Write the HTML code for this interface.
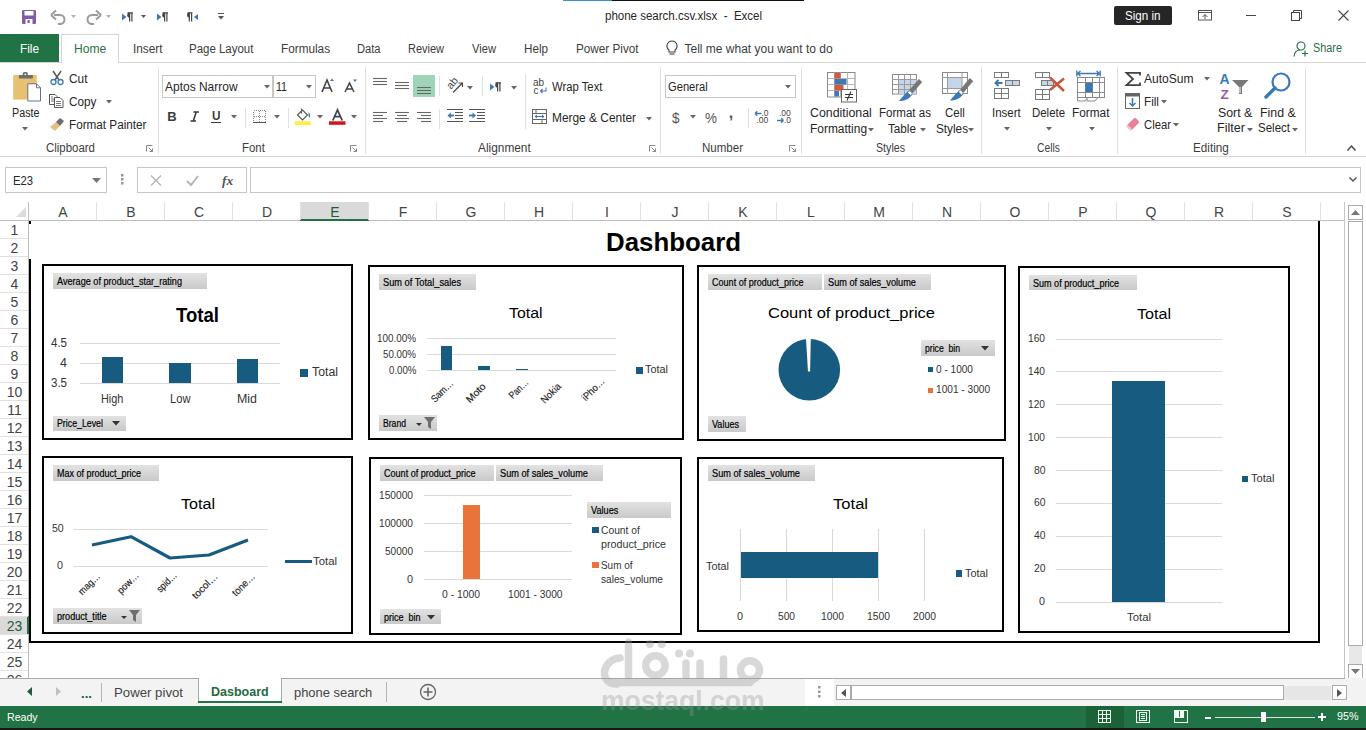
<!DOCTYPE html>
<html><head><meta charset="utf-8"><title>Excel Dashboard</title>
<style>
html,body{margin:0;padding:0;width:1366px;height:730px;overflow:hidden;background:#fff;}
body{position:relative;font-family:"Liberation Sans",sans-serif;}
.t{position:absolute;white-space:pre;}
.r{position:absolute;box-sizing:border-box;}
.s{position:absolute;overflow:visible;}
</style></head><body>
<div class="r" style="left:563.00px;top:0.00px;width:49.00px;height:1.00px;background:#3a8fd0;"></div>
<div class="r" style="left:612.00px;top:0.00px;width:192.00px;height:1.00px;background:#111;"></div>
<svg class="s" style="left:22.00px;top:10.00px;" width="14" height="14" viewBox="0 0 14 14"><rect x="0" y="0" width="14" height="14" rx="1.2" fill="#7b5ea7"/><rect x="2.5" y="1" width="9" height="4.5" fill="#fff"/><rect x="3.5" y="9" width="7" height="5" fill="#fff"/><rect x="5.5" y="10" width="2.2" height="3" fill="#7b5ea7"/></svg>
<svg class="s" style="left:50.00px;top:9.00px;" width="16" height="15" viewBox="0 0 16 15"><path d="M4 6 H10 a4.5 4.5 0 0 1 0 9 H8" fill="none" stroke="#9a9a9a" stroke-width="2"/><path d="M1 6 L6 1.5 M1 6 L6 10.5" stroke="#9a9a9a" stroke-width="2" fill="none"/></svg>
<svg class="s" style="left:71.00px;top:15.00px;" width="5" height="3" viewBox="0 0 5 3"><path d="M0 0 H5 L2.5 3 Z" fill="#b0b0b0"/></svg>
<svg class="s" style="left:86.00px;top:9.00px;" width="16" height="15" viewBox="0 0 16 15"><path d="M12 6 H6 a4.5 4.5 0 0 0 0 9 H8" fill="none" stroke="#9a9a9a" stroke-width="2"/><path d="M15 6 L10 1.5 M15 6 L10 10.5" stroke="#9a9a9a" stroke-width="2" fill="none"/></svg>
<svg class="s" style="left:106.00px;top:15.00px;" width="5" height="3" viewBox="0 0 5 3"><path d="M0 0 H5 L2.5 3 Z" fill="#b0b0b0"/></svg>
<svg class="s" style="left:122.00px;top:12.00px;" width="13" height="10" viewBox="0 0 13 10"><path d="M0 1.5 L4.5 5 L0 8.5 Z" fill="#3b79b6"/><path d="M5.5 0.8 H11 M7.6 1 V9.5 M9.9 1 V9.5" stroke="#444" stroke-width="1.2" fill="none"/><path d="M7.8 0.5 A2.6 2.6 0 0 0 7.8 5.7 Z" fill="#444"/></svg>
<svg class="s" style="left:141.00px;top:15.00px;" width="5" height="3" viewBox="0 0 5 3"><path d="M0 0 H5 L2.5 3 Z" fill="#555"/></svg>
<svg class="s" style="left:157.00px;top:12.00px;" width="13" height="10" viewBox="0 0 13 10"><path d="M0 1.5 L4.5 5 L0 8.5 Z" fill="#3b79b6"/><path d="M5.5 0.8 H11 M7.6 1 V9.5 M9.9 1 V9.5" stroke="#444" stroke-width="1.2" fill="none"/><path d="M7.8 0.5 A2.6 2.6 0 0 0 7.8 5.7 Z" fill="#444"/></svg>
<svg class="s" style="left:186.00px;top:12.00px;" width="13" height="10" viewBox="0 0 13 10"><path d="M1.5 0.8 H6.5 M3.3 1 V9.5 M5.6 1 V9.5" stroke="#444" stroke-width="1.2" fill="none"/><path d="M3.5 0.5 A2.5 2.5 0 0 0 3.5 5.5 Z" fill="#444"/><path d="M12 2 L8 5 L12 8 Z" fill="#3b79b6"/></svg>
<svg class="s" style="left:218.00px;top:13.00px;" width="6" height="7" viewBox="0 0 6 7"><path d="M0 0.5 H6" stroke="#555" stroke-width="1"/><path d="M0 3 H6 L3 6.5 Z" fill="#555"/></svg>
<div class="t" style="left:604.50px;top:10.00px;font-size:12.00px;line-height:12.00px;color:#262626;transform:scaleX(0.9585);transform-origin:0 0;">phone search.csv.xlsx  -  Excel</div>
<div class="r" style="left:1114.00px;top:6.00px;width:58.00px;height:19.00px;background:#262626;border-radius:2px;"></div>
<div class="t" style="left:1125.25px;top:9.75px;font-size:12.50px;line-height:12.50px;color:#fff;transform:scaleX(0.9293);transform-origin:0 0;">Sign in</div>
<svg class="s" style="left:1198.00px;top:10.00px;" width="14" height="11" viewBox="0 0 14 11"><rect x="0.5" y="0.5" width="13" height="9.5" fill="none" stroke="#555"/><path d="M0.5 2.5 H13.5" stroke="#555"/><path d="M7 9 V4.5 M4.5 7 L7 4.5 L9.5 7" stroke="#555" fill="none"/></svg>
<div class="r" style="left:1246.00px;top:15.00px;width:10.00px;height:1.00px;background:#444;"></div>
<svg class="s" style="left:1291.00px;top:10.00px;" width="11" height="11" viewBox="0 0 11 11"><rect x="0.5" y="2.5" width="8" height="8" fill="none" stroke="#444"/><path d="M2.5 2.5 V0.5 H10.5 V8.5 H8.5" fill="none" stroke="#444"/></svg>
<svg class="s" style="left:1338.00px;top:10.00px;" width="11" height="11" viewBox="0 0 11 11"><path d="M0.5 0.5 L10.5 10.5 M10.5 0.5 L0.5 10.5" stroke="#444" stroke-width="1.1"/></svg>
<div class="r" style="left:0.00px;top:34.00px;width:59.00px;height:29.00px;background:#217346;"></div>
<div class="t" style="left:20.00px;top:42.75px;font-size:12.50px;line-height:12.50px;color:#fff;transform:scaleX(0.9453);transform-origin:0 0;">File</div>
<div class="r" style="left:0.00px;top:62.00px;width:1366.00px;height:1.00px;background:#d5d5d5;"></div>
<div class="r" style="left:61.00px;top:34.00px;width:58.00px;height:29.00px;background:#fff;border:1px solid #d5d5d5;border-bottom:none;"></div>
<div class="t" style="left:73.60px;top:43.00px;font-size:12.00px;line-height:12.00px;color:#2b6e49;transform:scaleX(1.0094);transform-origin:0 0;">Home</div>
<div class="t" style="left:133.00px;top:43.00px;font-size:12.00px;line-height:12.00px;color:#3c3c3c;transform:scaleX(0.9833);transform-origin:0 0;">Insert</div>
<div class="t" style="left:189.40px;top:43.00px;font-size:12.00px;line-height:12.00px;color:#3c3c3c;transform:scaleX(0.9555);transform-origin:0 0;">Page Layout</div>
<div class="t" style="left:281.00px;top:43.00px;font-size:12.00px;line-height:12.00px;color:#3c3c3c;transform:scaleX(0.9800);transform-origin:0 0;">Formulas</div>
<div class="t" style="left:357.00px;top:43.00px;font-size:12.00px;line-height:12.00px;color:#3c3c3c;transform:scaleX(0.9291);transform-origin:0 0;">Data</div>
<div class="t" style="left:408.40px;top:43.00px;font-size:12.00px;line-height:12.00px;color:#3c3c3c;transform:scaleX(0.9162);transform-origin:0 0;">Review</div>
<div class="t" style="left:472.00px;top:43.00px;font-size:12.00px;line-height:12.00px;color:#3c3c3c;transform:scaleX(0.9302);transform-origin:0 0;">View</div>
<div class="t" style="left:524.30px;top:43.00px;font-size:12.00px;line-height:12.00px;color:#3c3c3c;transform:scaleX(0.9717);transform-origin:0 0;">Help</div>
<div class="t" style="left:576.00px;top:43.00px;font-size:12.00px;line-height:12.00px;color:#3c3c3c;transform:scaleX(0.9766);transform-origin:0 0;">Power Pivot</div>
<div class="t" style="left:684.50px;top:43.00px;font-size:12.00px;line-height:12.00px;color:#3c3c3c;">Tell me what you want to do</div>
<svg class="s" style="left:666.00px;top:40.00px;" width="12" height="16" viewBox="0 0 12 16"><path d="M6 1 a5 5 0 0 1 3 9 V12 H3 V10 a5 5 0 0 1 3 -9 Z" fill="none" stroke="#444" stroke-width="1.1"/><path d="M3.5 14 H8.5" stroke="#444" stroke-width="1.1"/></svg>
<svg class="s" style="left:1293.00px;top:41.00px;" width="16" height="16" viewBox="0 0 16 16"><circle cx="8" cy="5" r="4" fill="none" stroke="#2b6e49" stroke-width="1.2"/><path d="M1 15.5 C1.5 11 4 9 7 9" fill="none" stroke="#2b6e49" stroke-width="1.2"/><path d="M9 12.5 H15 M12 9.5 V15.5" stroke="#2b6e49" stroke-width="1.2"/></svg>
<div class="t" style="left:1313.00px;top:42.45px;font-size:12.50px;line-height:12.50px;color:#2b6e49;transform:scaleX(0.8683);transform-origin:0 0;">Share</div>
<div class="r" style="left:0.00px;top:156.00px;width:1366.00px;height:1.00px;background:#d5d5d5;"></div>
<div class="r" style="left:157.50px;top:67.00px;width:1.00px;height:87.00px;background:#e1e1e1;"></div>
<div class="r" style="left:364.50px;top:67.00px;width:1.00px;height:87.00px;background:#e1e1e1;"></div>
<div class="r" style="left:660.30px;top:67.00px;width:1.00px;height:87.00px;background:#e1e1e1;"></div>
<div class="r" style="left:800.70px;top:67.00px;width:1.00px;height:87.00px;background:#e1e1e1;"></div>
<div class="r" style="left:981.30px;top:67.00px;width:1.00px;height:87.00px;background:#e1e1e1;"></div>
<div class="r" style="left:1117.20px;top:67.00px;width:1.00px;height:87.00px;background:#e1e1e1;"></div>
<div class="r" style="left:1304.70px;top:67.00px;width:1.00px;height:87.00px;background:#e1e1e1;"></div>
<div class="t" style="left:46.00px;top:141.80px;font-size:12.00px;line-height:12.00px;color:#3c3c3c;transform:scaleX(0.9533);transform-origin:0 0;">Clipboard</div>
<div class="t" style="left:241.60px;top:141.80px;font-size:12.00px;line-height:12.00px;color:#3c3c3c;transform:scaleX(0.9500);transform-origin:0 0;">Font</div>
<div class="t" style="left:478.00px;top:141.80px;font-size:12.00px;line-height:12.00px;color:#3c3c3c;transform:scaleX(0.9888);transform-origin:0 0;">Alignment</div>
<div class="t" style="left:702.00px;top:141.80px;font-size:12.00px;line-height:12.00px;color:#3c3c3c;transform:scaleX(0.9602);transform-origin:0 0;">Number</div>
<div class="t" style="left:876.00px;top:141.80px;font-size:12.00px;line-height:12.00px;color:#3c3c3c;transform:scaleX(0.8869);transform-origin:0 0;">Styles</div>
<div class="t" style="left:1037.35px;top:141.80px;font-size:12.00px;line-height:12.00px;color:#3c3c3c;transform:scaleX(0.8577);transform-origin:0 0;">Cells</div>
<div class="t" style="left:1192.50px;top:141.80px;font-size:12.00px;line-height:12.00px;color:#3c3c3c;transform:scaleX(0.9755);transform-origin:0 0;">Editing</div>
<svg class="s" style="left:146.00px;top:145.00px;" width="7" height="7" viewBox="0 0 7 7"><path d="M0.5 6.5 V0.5 H6.5" fill="none" stroke="#888"/><path d="M2.5 2.5 L6.5 6.5 M3.5 6.5 H6.5 V3.5" fill="none" stroke="#888"/></svg>
<svg class="s" style="left:350.00px;top:145.00px;" width="7" height="7" viewBox="0 0 7 7"><path d="M0.5 6.5 V0.5 H6.5" fill="none" stroke="#888"/><path d="M2.5 2.5 L6.5 6.5 M3.5 6.5 H6.5 V3.5" fill="none" stroke="#888"/></svg>
<svg class="s" style="left:649.00px;top:145.00px;" width="7" height="7" viewBox="0 0 7 7"><path d="M0.5 6.5 V0.5 H6.5" fill="none" stroke="#888"/><path d="M2.5 2.5 L6.5 6.5 M3.5 6.5 H6.5 V3.5" fill="none" stroke="#888"/></svg>
<svg class="s" style="left:789.00px;top:145.00px;" width="7" height="7" viewBox="0 0 7 7"><path d="M0.5 6.5 V0.5 H6.5" fill="none" stroke="#888"/><path d="M2.5 2.5 L6.5 6.5 M3.5 6.5 H6.5 V3.5" fill="none" stroke="#888"/></svg>
<svg class="s" style="left:12.00px;top:71.00px;" width="30" height="32" viewBox="0 0 30 32"><rect x="1.2" y="4" width="23.5" height="24.6" fill="#e8c170"/><rect x="6.9" y="4" width="14" height="3.6" rx="0.8" fill="#6d6d6d"/><rect x="10.8" y="1" width="5" height="4" rx="1.6" fill="#6d6d6d"/><circle cx="13.3" cy="3.3" r="0.9" fill="#fff"/><path d="M15.8 12.8 H24.5 L28.5 16.8 V30 H15.8 Z" fill="#fff" stroke="#6b7280"/><path d="M24.5 12.8 V16.8 H28.5" fill="none" stroke="#6b7280"/></svg>
<div class="t" style="left:11.75px;top:107.35px;font-size:12.50px;line-height:12.50px;color:#262626;transform:scaleX(0.8594);transform-origin:0 0;">Paste</div>
<svg class="s" style="left:22.00px;top:127.00px;" width="6" height="4" viewBox="0 0 6 4"><path d="M0 0 H6 L3 3.5 Z" fill="#666"/></svg>
<svg class="s" style="left:50.00px;top:71.00px;" width="14" height="14" viewBox="0 0 14 14"><path d="M3 0 L9 9 M11 0 L5 9" stroke="#555" stroke-width="1.5"/><circle cx="3.5" cy="11" r="2.5" fill="none" stroke="#3b79b6" stroke-width="1.3"/><circle cx="10.5" cy="11" r="2.5" fill="none" stroke="#3b79b6" stroke-width="1.3"/></svg>
<div class="t" style="left:68.50px;top:72.75px;font-size:12.50px;line-height:12.50px;color:#262626;transform:scaleX(0.9487);transform-origin:0 0;">Cut</div>
<svg class="s" style="left:49.00px;top:94.00px;" width="15" height="14" viewBox="0 0 15 14"><path d="M0.5 0.5 H6 L8 2.5 V10.5 H0.5 Z" fill="#fff" stroke="#555"/><path d="M5.5 3.5 H11 L14 6.5 V13.5 H5.5 Z" fill="#fff" stroke="#555"/><path d="M7 7.5 H12 M7 9.5 H12 M7 11.5 H12 M2 3 H4 M2 5 H5 M2 7 H5" stroke="#555" stroke-width="0.8"/></svg>
<div class="t" style="left:68.50px;top:95.55px;font-size:12.50px;line-height:12.50px;color:#262626;transform:scaleX(0.9418);transform-origin:0 0;">Copy</div>
<svg class="s" style="left:106.00px;top:100.00px;" width="6" height="4" viewBox="0 0 6 4"><path d="M0 0 H6 L3 3.5 Z" fill="#666"/></svg>
<svg class="s" style="left:50.00px;top:117.00px;" width="15" height="14" viewBox="0 0 15 14"><path d="M0 10 L6 5 L10 9 L5 14 Z" fill="#e3c281"/><path d="M6 5 L10 1 L14 4 L10 9 Z" fill="#6d6d6d"/></svg>
<div class="t" style="left:68.50px;top:119.40px;font-size:12.00px;line-height:12.00px;color:#262626;transform:scaleX(0.9761);transform-origin:0 0;">Format Painter</div>
<div class="r" style="left:162.00px;top:75.00px;width:111.00px;height:23.00px;border:1px solid #c6c6c6;background:#fff;"></div>
<div class="r" style="left:272.50px;top:75.00px;width:43.00px;height:23.00px;border:1px solid #c6c6c6;background:#fff;"></div>
<div class="t" style="left:165.00px;top:81.15px;font-size:12.50px;line-height:12.50px;color:#262626;transform:scaleX(0.9578);transform-origin:0 0;">Aptos Narrow</div>
<svg class="s" style="left:263.50px;top:85.00px;" width="6" height="4" viewBox="0 0 6 4"><path d="M0 0 H6 L3 3.5 Z" fill="#666"/></svg>
<div class="t" style="left:276.00px;top:81.15px;font-size:12.50px;line-height:12.50px;color:#262626;transform:scaleX(0.8462);transform-origin:0 0;">11</div>
<svg class="s" style="left:306.00px;top:85.00px;" width="6" height="4" viewBox="0 0 6 4"><path d="M0 0 H6 L3 3.5 Z" fill="#666"/></svg>
<svg class="s" style="left:321.00px;top:78.00px;" width="14" height="15" viewBox="0 0 14 15"><path d="M1 14 L6 2 L11 14 M3 10 H9" fill="none" stroke="#444" stroke-width="1.6"/><path d="M9 3 L11 0.5 L13 3 Z" fill="#3b79b6"/></svg>
<svg class="s" style="left:344.00px;top:79.00px;" width="14" height="14" viewBox="0 0 14 14"><path d="M1 13 L5.5 4 L10 13 M3 10 H8" fill="none" stroke="#444" stroke-width="1.5"/><path d="M9 0.5 H13 L11 3 Z" fill="#3b79b6"/></svg>
<div class="t" style="left:167.30px;top:109.50px;font-size:13.00px;line-height:13.00px;color:#3c3c3c;font-weight:bold;">B</div>
<svg class="s" style="left:189.00px;top:111.00px;" width="11" height="11" viewBox="0 0 11 11"><path d="M4.5 1 H10 M1.5 10 H7 M7.2 1 L4.3 10" stroke="#3c3c3c" stroke-width="1.6" fill="none"/></svg>
<div class="t" style="left:212.15px;top:109.75px;font-size:12.50px;line-height:12.50px;color:#3c3c3c;font-weight:bold;transform:scaleX(0.9444);transform-origin:0 0;">U</div>
<div class="r" style="left:211.00px;top:122.00px;width:10.00px;height:1.00px;background:#3c3c3c;"></div>
<svg class="s" style="left:231.00px;top:115.00px;" width="6" height="4" viewBox="0 0 6 4"><path d="M0 0 H6 L3 3.5 Z" fill="#666"/></svg>
<div class="r" style="left:244.50px;top:107.50px;width:1.00px;height:20.00px;background:#e1e1e1;"></div>
<svg class="s" style="left:253.00px;top:110.00px;" width="13" height="13" viewBox="0 0 13 13"><g shape-rendering="crispEdges" stroke="#8a8a8a" stroke-dasharray="1 1" fill="none"><rect x="0.5" y="0.5" width="12" height="12"/><path d="M6.5 0.5 V12.5 M0.5 6.5 H12.5"/></g><path d="M0 12.5 H13" stroke="#555" shape-rendering="crispEdges"/></svg>
<svg class="s" style="left:274.00px;top:115.00px;" width="6" height="4" viewBox="0 0 6 4"><path d="M0 0 H6 L3 3.5 Z" fill="#666"/></svg>
<div class="r" style="left:287.50px;top:107.50px;width:1.00px;height:20.00px;background:#e1e1e1;"></div>
<svg class="s" style="left:294.00px;top:108.00px;" width="18" height="18" viewBox="0 0 18 18"><path d="M3.5 7 L8.5 2 L13.5 7 L8.5 12 Z" fill="#fff" stroke="#555" stroke-width="1.1"/><path d="M7.5 0.5 V5.5" stroke="#555"/><path d="M14.5 4 Q17 7 15.5 10 Q14 8 14.5 4 Z" fill="#3b79b6"/><rect x="0.7" y="13.3" width="16" height="3.7" fill="#ffef3a"/></svg>
<svg class="s" style="left:317.00px;top:115.00px;" width="6" height="4" viewBox="0 0 6 4"><path d="M0 0 H6 L3 3.5 Z" fill="#666"/></svg>
<svg class="s" style="left:329.00px;top:109.00px;" width="17" height="17" viewBox="0 0 17 17"><path d="M3.8 11.5 L8.5 1 L13.2 11.5 M5.6 7.6 H11.4" fill="none" stroke="#444" stroke-width="1.8"/><rect x="0" y="12.3" width="16.5" height="3.5" fill="#d4141b"/></svg>
<svg class="s" style="left:351.00px;top:115.00px;" width="6" height="4" viewBox="0 0 6 4"><path d="M0 0 H6 L3 3.5 Z" fill="#666"/></svg>
<svg class="s" style="left:373.00px;top:78.00px;" width="15" height="10" viewBox="0 0 15 10"><path d="M0 0.5 H14" stroke="#666" stroke-width="1.1"/><path d="M0 3.5 H14" stroke="#666" stroke-width="1.1"/><path d="M0 6.5 H14" stroke="#666" stroke-width="1.1"/></svg>
<svg class="s" style="left:395.00px;top:82.00px;" width="15" height="10" viewBox="0 0 15 10"><path d="M0 0.5 H14" stroke="#666" stroke-width="1.1"/><path d="M0 3.5 H14" stroke="#666" stroke-width="1.1"/><path d="M0 6.5 H14" stroke="#666" stroke-width="1.1"/></svg>
<div class="r" style="left:413.00px;top:75.00px;width:22.00px;height:22.00px;background:#9fd5b7;"></div>
<svg class="s" style="left:417.00px;top:87.00px;" width="15" height="10" viewBox="0 0 15 10"><path d="M0 0.5 H14" stroke="#666" stroke-width="1.1"/><path d="M0 3.5 H14" stroke="#666" stroke-width="1.1"/><path d="M0 6.5 H14" stroke="#666" stroke-width="1.1"/></svg>
<svg class="s" style="left:446.00px;top:77.00px;" width="18" height="17" viewBox="0 0 18 17"><text x="1" y="10" font-family="Liberation Sans" font-size="10.5" fill="#444" transform="rotate(-52 6 7)">ab</text><path d="M7 15.5 L16.5 6 M12.5 6 H16.5 V10" fill="none" stroke="#444" stroke-width="1.1"/></svg>
<svg class="s" style="left:467.00px;top:86.00px;" width="6" height="4" viewBox="0 0 6 4"><path d="M0 0 H6 L3 3.5 Z" fill="#666"/></svg>
<div class="r" style="left:439.00px;top:76.00px;width:1.00px;height:20.00px;background:#e1e1e1;"></div>
<div class="r" style="left:481.50px;top:76.00px;width:1.00px;height:20.00px;background:#e1e1e1;"></div>
<svg class="s" style="left:490.00px;top:82.00px;" width="13" height="10" viewBox="0 0 13 10"><path d="M0 1.5 L4.5 5 L0 8.5 Z" fill="#3b79b6"/><path d="M5.5 0.8 H11 M7.6 1 V9.5 M9.9 1 V9.5" stroke="#444" stroke-width="1.2" fill="none"/><path d="M7.8 0.5 A2.6 2.6 0 0 0 7.8 5.7 Z" fill="#444"/></svg>
<svg class="s" style="left:511.00px;top:86.00px;" width="6" height="4" viewBox="0 0 6 4"><path d="M0 0 H6 L3 3.5 Z" fill="#666"/></svg>
<div class="r" style="left:524.50px;top:74.00px;width:1.00px;height:55.00px;background:#e1e1e1;"></div>
<svg class="s" style="left:533.00px;top:77.00px;" width="15" height="18" viewBox="0 0 15 18"><text x="0" y="8.5" font-family="Liberation Sans" font-size="10" fill="#444">ab</text><text x="0.5" y="16.5" font-family="Liberation Sans" font-size="10" fill="#444">c</text><path d="M13 10.5 V14 H7.5 M9.5 12 L7.5 14 L9.5 16" fill="none" stroke="#3b79b6" stroke-width="1.1"/></svg>
<div class="t" style="left:551.60px;top:81.25px;font-size:12.50px;line-height:12.50px;color:#262626;transform:scaleX(0.9032);transform-origin:0 0;">Wrap Text</div>
<svg class="s" style="left:373.00px;top:112.00px;" width="15" height="13" viewBox="0 0 15 13"><path d="M0 0.5 H14" stroke="#666" stroke-width="1.1"/><path d="M0 3.5 H10" stroke="#666" stroke-width="1.1"/><path d="M0 6.5 H14" stroke="#666" stroke-width="1.1"/><path d="M0 9.5 H10" stroke="#666" stroke-width="1.1"/></svg>
<svg class="s" style="left:395.00px;top:112.00px;" width="15" height="13" viewBox="0 0 15 13"><path d="M0 0.5 H14" stroke="#666" stroke-width="1.1"/><path d="M2 3.5 H12" stroke="#666" stroke-width="1.1"/><path d="M0 6.5 H14" stroke="#666" stroke-width="1.1"/><path d="M2 9.5 H12" stroke="#666" stroke-width="1.1"/></svg>
<svg class="s" style="left:417.00px;top:112.00px;" width="15" height="13" viewBox="0 0 15 13"><path d="M0 0.5 H14" stroke="#666" stroke-width="1.1"/><path d="M4 3.5 H14" stroke="#666" stroke-width="1.1"/><path d="M0 6.5 H14" stroke="#666" stroke-width="1.1"/><path d="M4 9.5 H14" stroke="#666" stroke-width="1.1"/></svg>
<div class="r" style="left:439.00px;top:109.00px;width:1.00px;height:20.00px;background:#e1e1e1;"></div>
<svg class="s" style="left:447.00px;top:109.00px;" width="16" height="14" viewBox="0 0 16 14"><path d="M0 0.5 H16 M8 3.5 H16 M8 6.5 H16 M8 9.5 H16 M0 12.5 H16" stroke="#555" stroke-width="1.1"/><path d="M0.5 6.5 L4 3.5 V9.5 Z" fill="#3b79b6"/><path d="M3 6.5 H7" stroke="#3b79b6" stroke-width="1.8"/></svg>
<svg class="s" style="left:469.00px;top:109.00px;" width="16" height="14" viewBox="0 0 16 14"><path d="M0 0.5 H16 M8 3.5 H16 M8 6.5 H16 M8 9.5 H16 M0 12.5 H16" stroke="#555" stroke-width="1.1"/><path d="M7 6.5 L3.5 3.5 V9.5 Z" fill="#3b79b6"/><path d="M0 6.5 H4.5" stroke="#3b79b6" stroke-width="1.8"/></svg>
<svg class="s" style="left:532.00px;top:109.00px;" width="15" height="15" viewBox="0 0 15 15"><rect x="0.5" y="0.5" width="14" height="14" fill="#fff" stroke="#666"/><path d="M0.5 4.5 H14.5 M0.5 10.5 H14.5 M4 0.5 V4.5 M10 10.5 V14.5" stroke="#666"/><path d="M3 7.5 H12 M3 7.5 L5 6 M3 7.5 L5 9 M12 7.5 L10 6 M12 7.5 L10 9" stroke="#3b79b6" fill="none"/></svg>
<div class="t" style="left:551.60px;top:112.45px;font-size:12.50px;line-height:12.50px;color:#262626;transform:scaleX(0.9524);transform-origin:0 0;">Merge &amp; Center</div>
<svg class="s" style="left:646.00px;top:117.00px;" width="6" height="4" viewBox="0 0 6 4"><path d="M0 0 H6 L3 3.5 Z" fill="#666"/></svg>
<div class="r" style="left:665.00px;top:75.00px;width:131.00px;height:23.00px;border:1px solid #c6c6c6;background:#fff;"></div>
<div class="t" style="left:668.00px;top:81.25px;font-size:12.50px;line-height:12.50px;color:#262626;transform:scaleX(0.8921);transform-origin:0 0;">General</div>
<svg class="s" style="left:785.00px;top:85.00px;" width="6" height="4" viewBox="0 0 6 4"><path d="M0 0 H6 L3 3.5 Z" fill="#666"/></svg>
<div class="t" style="left:672.25px;top:110.00px;font-size:15.00px;line-height:15.00px;color:#555;transform:scaleX(0.9036);transform-origin:0 0;">$</div>
<svg class="s" style="left:690.00px;top:115.00px;" width="6" height="4" viewBox="0 0 6 4"><path d="M0 0 H6 L3 3.5 Z" fill="#666"/></svg>
<div class="t" style="left:704.50px;top:110.75px;font-size:14.50px;line-height:14.50px;color:#555;transform:scaleX(0.9302);transform-origin:0 0;">%</div>
<div class="t" style="left:728.80px;top:104.50px;font-size:16.00px;line-height:16.00px;color:#555;font-weight:bold;">,</div>
<div class="r" style="left:747.50px;top:108.00px;width:1.00px;height:20.00px;background:#e1e1e1;"></div>
<svg class="s" style="left:754.00px;top:109.00px;" width="17" height="15" viewBox="0 0 17 15"><text x="7.5" y="7" font-family="Liberation Sans" font-size="8.5" fill="#444">.0</text><text x="2.5" y="14" font-family="Liberation Sans" font-size="8.5" fill="#444">.00</text><path d="M1 4.5 H7.5 M1 4.5 L3.3 2.2 M1 4.5 L3.3 6.8" stroke="#3b79b6" stroke-width="1.3" fill="none"/></svg>
<svg class="s" style="left:777.00px;top:109.00px;" width="17" height="15" viewBox="0 0 17 15"><text x="2" y="7" font-family="Liberation Sans" font-size="8.5" fill="#444">.00</text><text x="7" y="14" font-family="Liberation Sans" font-size="8.5" fill="#444">.0</text><path d="M0 11.5 H6.5 M6.5 11.5 L4.2 9.2 M6.5 11.5 L4.2 13.8" stroke="#3b79b6" stroke-width="1.3" fill="none"/></svg>
<svg class="s" style="left:826.00px;top:71.00px;" width="32" height="32" viewBox="0 0 32 32"><rect x="1.5" y="1.5" width="27.5" height="24.5" fill="#fff" stroke="#8a8a8a"/><path d="M1.5 7.5 H29 M1.5 13.5 H29 M1.5 19.5 H29 M8.5 1.5 V26 M14.5 1.5 V26 M21.5 1.5 V26" stroke="#b5b5b5"/><rect x="8.5" y="2" width="6" height="5.5" fill="#d9553b"/><rect x="8.5" y="8" width="12" height="5.5" fill="#3b79b6"/><rect x="8.5" y="14" width="9" height="5.5" fill="#d9553b"/><rect x="8.5" y="20" width="4.5" height="5.5" fill="#3b79b6"/><rect x="15.5" y="18.5" width="15" height="12.5" fill="#fff" stroke="#666"/><path d="M19 23.5 H27 M19 26.5 H27 M25 20.5 L21 29.5" stroke="#333" stroke-width="1.1"/></svg>
<div class="t" style="left:810.15px;top:106.55px;font-size:12.50px;line-height:12.50px;color:#262626;transform:scaleX(0.9872);transform-origin:0 0;">Conditional</div>
<div class="t" style="left:809.50px;top:122.75px;font-size:12.50px;line-height:12.50px;color:#262626;transform:scaleX(0.9548);transform-origin:0 0;">Formatting</div>
<svg class="s" style="left:868.00px;top:128.00px;" width="6" height="4" viewBox="0 0 6 4"><path d="M0 0 H6 L3 3.5 Z" fill="#666"/></svg>
<svg class="s" style="left:891.00px;top:73.00px;" width="31" height="29" viewBox="0 0 31 29"><rect x="1.5" y="1.5" width="24" height="19.5" fill="#fff" stroke="#8a8a8a"/><rect x="8" y="6.5" width="17.5" height="14.5" fill="#c6d6ea"/><path d="M1.5 6.5 H25.5 M1.5 11.5 H25.5 M1.5 16.5 H25.5 M7.5 1.5 V21 M13.5 1.5 V21 M19.5 1.5 V21" stroke="#9a9a9a"/><path d="M29.5 7.5 L20 18.5" stroke="#777" stroke-width="4.5"/><circle cx="18.5" cy="20.5" r="2.6" fill="#fff" stroke="#777"/><path d="M16.5 19 C13 21 11 25 8 28 C13 28 19 26 20 22.5 Z" fill="#3b79b6"/></svg>
<div class="t" style="left:879.00px;top:106.55px;font-size:12.50px;line-height:12.50px;color:#262626;transform:scaleX(0.9236);transform-origin:0 0;">Format as</div>
<div class="t" style="left:888.00px;top:122.75px;font-size:12.50px;line-height:12.50px;color:#262626;transform:scaleX(0.9365);transform-origin:0 0;">Table</div>
<svg class="s" style="left:920.00px;top:128.00px;" width="6" height="4" viewBox="0 0 6 4"><path d="M0 0 H6 L3 3.5 Z" fill="#666"/></svg>
<svg class="s" style="left:942.00px;top:71.00px;" width="31" height="31" viewBox="0 0 31 31"><rect x="0.5" y="1.5" width="25" height="21" fill="#fff" stroke="#8a8a8a"/><rect x="5.5" y="6.5" width="14.5" height="11" fill="#c6d6ea"/><path d="M0.5 6.5 H25.5 M0.5 17.5 H25.5 M5.5 1.5 V22.5 M20 1.5 V22.5" stroke="#9a9a9a"/><path d="M29.5 8.5 L20 20" stroke="#777" stroke-width="4.5"/><circle cx="18.5" cy="22" r="2.6" fill="#fff" stroke="#777"/><path d="M16.5 20.5 C13 22.5 11 26.5 8 29.5 C13 29.5 19 27.5 20 24 Z" fill="#3b79b6"/></svg>
<div class="t" style="left:945.15px;top:106.55px;font-size:12.50px;line-height:12.50px;color:#262626;transform:scaleX(0.9163);transform-origin:0 0;">Cell</div>
<div class="t" style="left:936.00px;top:122.75px;font-size:12.50px;line-height:12.50px;color:#262626;transform:scaleX(0.9412);transform-origin:0 0;">Styles</div>
<svg class="s" style="left:968.00px;top:128.00px;" width="6" height="4" viewBox="0 0 6 4"><path d="M0 0 H6 L3 3.5 Z" fill="#666"/></svg>
<svg class="s" style="left:993.00px;top:72.00px;" width="28" height="28" viewBox="0 0 28 28"><g fill="#fff" stroke="#7a7a7a"><rect x="1.5" y="0.5" width="14" height="5"/><path d="M8.5 0.5 V5.5"/><rect x="12.5" y="8.5" width="14" height="5" fill="#c6d6ea"/><path d="M19.5 8.5 V13.5"/><rect x="1.5" y="16.5" width="14" height="10"/><path d="M1.5 21.5 H15.5 M8.5 16.5 V26.5"/></g><path d="M2.5 11 H9.5 M5.5 8 L2.5 11 L5.5 14" fill="none" stroke="#3b79b6" stroke-width="2"/></svg>
<div class="t" style="left:992.00px;top:106.75px;font-size:12.50px;line-height:12.50px;color:#262626;transform:scaleX(0.9201);transform-origin:0 0;">Insert</div>
<svg class="s" style="left:1003.50px;top:127.00px;" width="6" height="4" viewBox="0 0 6 4"><path d="M0 0 H6 L3 3.5 Z" fill="#666"/></svg>
<svg class="s" style="left:1034.00px;top:72.00px;" width="31" height="28" viewBox="0 0 31 28"><g fill="#fff" stroke="#7a7a7a"><rect x="1.5" y="0.5" width="14" height="5"/><path d="M8.5 0.5 V5.5"/><rect x="7.5" y="8.5" width="12" height="5" fill="#c6d6ea"/><path d="M13.5 8.5 V13.5"/><rect x="1.5" y="17.5" width="14" height="10"/><path d="M1.5 22.5 H15.5 M8.5 17.5 V27.5"/></g><path d="M16 5.5 L30 19 M30 6.5 L16 18" stroke="#c9563c" stroke-width="2.5"/></svg>
<div class="t" style="left:1032.00px;top:106.75px;font-size:12.50px;line-height:12.50px;color:#262626;transform:scaleX(0.9141);transform-origin:0 0;">Delete</div>
<svg class="s" style="left:1046.00px;top:127.00px;" width="6" height="4" viewBox="0 0 6 4"><path d="M0 0 H6 L3 3.5 Z" fill="#666"/></svg>
<svg class="s" style="left:1076.00px;top:70.00px;" width="30" height="32" viewBox="0 0 30 32"><path d="M1.5 3.5 H23.5 M4.5 1 L1.5 3.5 L4.5 6 M20.5 1 L23.5 3.5 L20.5 6 M0.8 0.5 V6.5 M24.2 0.5 V6.5" fill="none" stroke="#3b79b6" stroke-width="1.3"/><g fill="none" stroke="#8a8a8a"><rect x="1.5" y="7.5" width="27" height="20" fill="#fff"/><path d="M1.5 12.5 H28.5 M1.5 22.5 H28.5 M9.5 7.5 V27.5 M16.5 7.5 V27.5 M23.5 7.5 V27.5"/><path d="M1.5 27.5 V31 H9 L11 28.5 M11 27.5 V31 H19 L21.5 28"/></g><rect x="9.5" y="13" width="7" height="9" fill="#3b79b6"/></svg>
<div class="t" style="left:1071.95px;top:106.75px;font-size:12.50px;line-height:12.50px;color:#262626;transform:scaleX(0.9470);transform-origin:0 0;">Format</div>
<svg class="s" style="left:1089.00px;top:127.00px;" width="6" height="4" viewBox="0 0 6 4"><path d="M0 0 H6 L3 3.5 Z" fill="#666"/></svg>
<svg class="s" style="left:1125.00px;top:72.00px;" width="16" height="14" viewBox="0 0 16 14"><path d="M15 3.5 V0.8 H1.5 L8 7 L1.5 13.2 H15 V10.5" fill="none" stroke="#444" stroke-width="1.8"/></svg>
<div class="t" style="left:1144.40px;top:72.95px;font-size:12.50px;line-height:12.50px;color:#262626;transform:scaleX(0.9650);transform-origin:0 0;">AutoSum</div>
<svg class="s" style="left:1204.00px;top:77.00px;" width="6" height="4" viewBox="0 0 6 4"><path d="M0 0 H6 L3 3.5 Z" fill="#666"/></svg>
<svg class="s" style="left:1125.00px;top:93.00px;" width="16" height="16" viewBox="0 0 16 16"><rect x="0.5" y="0.5" width="14" height="15" fill="#fff" stroke="#666"/><rect x="0.5" y="0.5" width="14" height="3" fill="#666"/><path d="M7.5 5 V13 M4.5 10 L7.5 13 L10.5 10" stroke="#3b79b6" stroke-width="1.5" fill="none"/></svg>
<div class="t" style="left:1144.40px;top:95.75px;font-size:12.50px;line-height:12.50px;color:#262626;transform:scaleX(0.9375);transform-origin:0 0;">Fill</div>
<svg class="s" style="left:1161.00px;top:100.00px;" width="6" height="4" viewBox="0 0 6 4"><path d="M0 0 H6 L3 3.5 Z" fill="#666"/></svg>
<svg class="s" style="left:1126.00px;top:117.00px;" width="14" height="13" viewBox="0 0 14 13"><path d="M0.8 8.5 L8 1.3 Q9 0.3 10 1.3 L12.7 4 Q13.7 5 12.7 6 L5.5 13.2 Z" fill="#e8829a"/><path d="M0.8 8.5 L5.5 13.2" stroke="#f4c1cd" stroke-width="2.2"/></svg>
<div class="t" style="left:1144.40px;top:118.75px;font-size:12.50px;line-height:12.50px;color:#262626;transform:scaleX(0.9030);transform-origin:0 0;">Clear</div>
<svg class="s" style="left:1173.00px;top:123.00px;" width="6" height="4" viewBox="0 0 6 4"><path d="M0 0 H6 L3 3.5 Z" fill="#666"/></svg>
<svg class="s" style="left:1219.00px;top:72.00px;" width="31" height="28" viewBox="0 0 31 28"><text x="0.5" y="12" font-family="Liberation Sans" font-weight="bold" font-size="14" fill="#3b79b6">A</text><text x="1.5" y="26.5" font-family="Liberation Sans" font-weight="bold" font-size="13.5" fill="#8e5ea6">Z</text><path d="M13 8 H29.5 L23 15 V22 H20 V15 Z" fill="#7a7a7a"/><path d="M21 15 V21" stroke="#fff" stroke-width="1"/></svg>
<div class="t" style="left:1217.85px;top:106.75px;font-size:12.50px;line-height:12.50px;color:#262626;transform:scaleX(0.9885);transform-origin:0 0;">Sort &amp;</div>
<div class="t" style="left:1217.00px;top:122.45px;font-size:12.50px;line-height:12.50px;color:#262626;transform:scaleX(1.0072);transform-origin:0 0;">Filter</div>
<svg class="s" style="left:1247.00px;top:128.00px;" width="6" height="4" viewBox="0 0 6 4"><path d="M0 0 H6 L3 3.5 Z" fill="#666"/></svg>
<svg class="s" style="left:1264.00px;top:71.00px;" width="28" height="28" viewBox="0 0 28 28"><circle cx="17" cy="11" r="8.5" fill="none" stroke="#3b79b6" stroke-width="2.2"/><path d="M11 17 L2 26" stroke="#3b79b6" stroke-width="3.5" stroke-linecap="round"/></svg>
<div class="t" style="left:1259.65px;top:106.75px;font-size:12.50px;line-height:12.50px;color:#262626;transform:scaleX(0.9889);transform-origin:0 0;">Find &amp;</div>
<div class="t" style="left:1258.00px;top:122.45px;font-size:12.50px;line-height:12.50px;color:#262626;transform:scaleX(0.9222);transform-origin:0 0;">Select</div>
<svg class="s" style="left:1292.00px;top:128.00px;" width="6" height="4" viewBox="0 0 6 4"><path d="M0 0 H6 L3 3.5 Z" fill="#666"/></svg>
<svg class="s" style="left:1347.00px;top:145.00px;" width="9" height="6" viewBox="0 0 9 6"><path d="M0.5 5.5 L4.5 1 L8.5 5.5" fill="none" stroke="#444" stroke-width="1.4"/></svg>
<div class="r" style="left:5.00px;top:167.00px;width:102.00px;height:26.00px;border:1px solid #c6c6c6;background:#fff;"></div>
<div class="t" style="left:13.00px;top:175.05px;font-size:12.50px;line-height:12.50px;color:#262626;transform:scaleX(0.9009);transform-origin:0 0;">E23</div>
<svg class="s" style="left:92.00px;top:178.00px;" width="9" height="5" viewBox="0 0 9 5"><path d="M0 0 H9 L4.5 5 Z" fill="#777"/></svg>
<svg class="s" style="left:121.00px;top:174.00px;" width="3" height="11" viewBox="0 0 3 11"><rect x="0" y="0" width="2.5" height="2.5" fill="#999"/><rect x="0" y="4" width="2.5" height="2.5" fill="#999"/><rect x="0" y="8" width="2.5" height="2.5" fill="#999"/></svg>
<div class="r" style="left:137.00px;top:167.00px;width:110.00px;height:26.00px;border:1px solid #c6c6c6;background:#fff;"></div>
<svg class="s" style="left:150.00px;top:175.00px;" width="12" height="11" viewBox="0 0 12 11"><path d="M1 0.5 L11 10.5 M11 0.5 L1 10.5" stroke="#b5b5b5" stroke-width="1.4"/></svg>
<svg class="s" style="left:186.00px;top:175.00px;" width="13" height="11" viewBox="0 0 13 11"><path d="M1 6 L5 10 L12 1" fill="none" stroke="#b5b5b5" stroke-width="2"/></svg>
<div class="t" style="left:222.00px;top:173.50px;font-size:13.00px;line-height:13.00px;color:#555;font-weight:bold;transform:scaleX(1.0345);transform-origin:0 0;font-style:italic;font-family:'Liberation Serif';">fx</div>
<div class="r" style="left:250.00px;top:167.00px;width:1111.00px;height:26.00px;border:1px solid #c6c6c6;background:#fff;"></div>
<svg class="s" style="left:1349.00px;top:177.00px;" width="8" height="5" viewBox="0 0 8 5"><path d="M0.5 0.5 L4 4 L7.5 0.5" fill="none" stroke="#555" stroke-width="1.5"/></svg>
<svg class="s" style="left:16.00px;top:207.00px;" width="10" height="10" viewBox="0 0 10 10"><path d="M10 0 V10 H0 Z" fill="#dcdcdc"/></svg>
<div class="r" style="left:28.00px;top:202.00px;width:1.00px;height:476.00px;background:#bdbdbd;"></div>
<div class="r" style="left:0.00px;top:220.00px;width:1344.00px;height:1.00px;background:#bdbdbd;"></div>
<div class="r" style="left:300.00px;top:202.00px;width:69.00px;height:18.00px;background:#dadada;"></div>
<div class="r" style="left:300.00px;top:219.00px;width:69.00px;height:2.00px;background:#217346;"></div>
<div class="r" style="left:96.00px;top:202.00px;width:1.00px;height:18.00px;background:#e1e1e1;"></div>
<div class="t" style="left:58.30px;top:205.20px;font-size:14.00px;line-height:14.00px;color:#444;">A</div>
<div class="r" style="left:164.00px;top:202.00px;width:1.00px;height:18.00px;background:#e1e1e1;"></div>
<div class="t" style="left:126.35px;top:205.20px;font-size:14.00px;line-height:14.00px;color:#444;">B</div>
<div class="r" style="left:232.00px;top:202.00px;width:1.00px;height:18.00px;background:#e1e1e1;"></div>
<div class="t" style="left:193.95px;top:205.20px;font-size:14.00px;line-height:14.00px;color:#444;">C</div>
<div class="r" style="left:300.00px;top:202.00px;width:1.00px;height:18.00px;background:#e1e1e1;"></div>
<div class="t" style="left:261.95px;top:205.20px;font-size:14.00px;line-height:14.00px;color:#444;">D</div>
<div class="r" style="left:368.00px;top:202.00px;width:1.00px;height:18.00px;background:#e1e1e1;"></div>
<div class="t" style="left:330.35px;top:205.20px;font-size:14.00px;line-height:14.00px;color:#1e5b3a;">E</div>
<div class="r" style="left:436.00px;top:202.00px;width:1.00px;height:18.00px;background:#e1e1e1;"></div>
<div class="t" style="left:398.70px;top:205.20px;font-size:14.00px;line-height:14.00px;color:#444;">F</div>
<div class="r" style="left:504.00px;top:202.00px;width:1.00px;height:18.00px;background:#e1e1e1;"></div>
<div class="t" style="left:465.55px;top:205.20px;font-size:14.00px;line-height:14.00px;color:#444;">G</div>
<div class="r" style="left:572.00px;top:202.00px;width:1.00px;height:18.00px;background:#e1e1e1;"></div>
<div class="t" style="left:533.95px;top:205.20px;font-size:14.00px;line-height:14.00px;color:#444;">H</div>
<div class="r" style="left:640.00px;top:202.00px;width:1.00px;height:18.00px;background:#e1e1e1;"></div>
<div class="t" style="left:605.05px;top:205.20px;font-size:14.00px;line-height:14.00px;color:#444;">I</div>
<div class="r" style="left:708.00px;top:202.00px;width:1.00px;height:18.00px;background:#e1e1e1;"></div>
<div class="t" style="left:671.50px;top:205.20px;font-size:14.00px;line-height:14.00px;color:#444;">J</div>
<div class="r" style="left:776.00px;top:202.00px;width:1.00px;height:18.00px;background:#e1e1e1;"></div>
<div class="t" style="left:738.35px;top:205.20px;font-size:14.00px;line-height:14.00px;color:#444;">K</div>
<div class="r" style="left:844.00px;top:202.00px;width:1.00px;height:18.00px;background:#e1e1e1;"></div>
<div class="t" style="left:807.10px;top:205.20px;font-size:14.00px;line-height:14.00px;color:#444;">L</div>
<div class="r" style="left:912.00px;top:202.00px;width:1.00px;height:18.00px;background:#e1e1e1;"></div>
<div class="t" style="left:873.15px;top:205.20px;font-size:14.00px;line-height:14.00px;color:#444;">M</div>
<div class="r" style="left:980.00px;top:202.00px;width:1.00px;height:18.00px;background:#e1e1e1;"></div>
<div class="t" style="left:941.95px;top:205.20px;font-size:14.00px;line-height:14.00px;color:#444;">N</div>
<div class="r" style="left:1048.00px;top:202.00px;width:1.00px;height:18.00px;background:#e1e1e1;"></div>
<div class="t" style="left:1009.55px;top:205.20px;font-size:14.00px;line-height:14.00px;color:#444;">O</div>
<div class="r" style="left:1116.00px;top:202.00px;width:1.00px;height:18.00px;background:#e1e1e1;"></div>
<div class="t" style="left:1078.35px;top:205.20px;font-size:14.00px;line-height:14.00px;color:#444;">P</div>
<div class="r" style="left:1184.00px;top:202.00px;width:1.00px;height:18.00px;background:#e1e1e1;"></div>
<div class="t" style="left:1145.55px;top:205.20px;font-size:14.00px;line-height:14.00px;color:#444;">Q</div>
<div class="r" style="left:1252.00px;top:202.00px;width:1.00px;height:18.00px;background:#e1e1e1;"></div>
<div class="t" style="left:1213.95px;top:205.20px;font-size:14.00px;line-height:14.00px;color:#444;">R</div>
<div class="r" style="left:1320.00px;top:202.00px;width:1.00px;height:18.00px;background:#e1e1e1;"></div>
<div class="t" style="left:1282.35px;top:205.20px;font-size:14.00px;line-height:14.00px;color:#444;">S</div>
<div class="r" style="left:0.00px;top:616.00px;width:28.00px;height:18.00px;background:#dadada;"></div>
<div class="r" style="left:26.50px;top:616.00px;width:2.00px;height:18.00px;background:#217346;"></div>
<div class="r" style="left:0.00px;top:238.00px;width:28.00px;height:1.00px;background:#e1e1e1;"></div>
<div class="t" style="left:10.60px;top:222.60px;font-size:14.00px;line-height:14.00px;color:#444;">1</div>
<div class="r" style="left:0.00px;top:256.00px;width:28.00px;height:1.00px;background:#e1e1e1;"></div>
<div class="t" style="left:10.60px;top:240.60px;font-size:14.00px;line-height:14.00px;color:#444;">2</div>
<div class="r" style="left:0.00px;top:274.00px;width:28.00px;height:1.00px;background:#e1e1e1;"></div>
<div class="t" style="left:10.60px;top:258.60px;font-size:14.00px;line-height:14.00px;color:#444;">3</div>
<div class="r" style="left:0.00px;top:292.00px;width:28.00px;height:1.00px;background:#e1e1e1;"></div>
<div class="t" style="left:10.60px;top:276.60px;font-size:14.00px;line-height:14.00px;color:#444;">4</div>
<div class="r" style="left:0.00px;top:310.00px;width:28.00px;height:1.00px;background:#e1e1e1;"></div>
<div class="t" style="left:10.60px;top:294.60px;font-size:14.00px;line-height:14.00px;color:#444;">5</div>
<div class="r" style="left:0.00px;top:328.00px;width:28.00px;height:1.00px;background:#e1e1e1;"></div>
<div class="t" style="left:10.60px;top:312.60px;font-size:14.00px;line-height:14.00px;color:#444;">6</div>
<div class="r" style="left:0.00px;top:346.00px;width:28.00px;height:1.00px;background:#e1e1e1;"></div>
<div class="t" style="left:10.60px;top:330.60px;font-size:14.00px;line-height:14.00px;color:#444;">7</div>
<div class="r" style="left:0.00px;top:364.00px;width:28.00px;height:1.00px;background:#e1e1e1;"></div>
<div class="t" style="left:10.60px;top:348.60px;font-size:14.00px;line-height:14.00px;color:#444;">8</div>
<div class="r" style="left:0.00px;top:382.00px;width:28.00px;height:1.00px;background:#e1e1e1;"></div>
<div class="t" style="left:10.60px;top:366.60px;font-size:14.00px;line-height:14.00px;color:#444;">9</div>
<div class="r" style="left:0.00px;top:400.00px;width:28.00px;height:1.00px;background:#e1e1e1;"></div>
<div class="t" style="left:6.70px;top:384.60px;font-size:14.00px;line-height:14.00px;color:#444;">10</div>
<div class="r" style="left:0.00px;top:418.00px;width:28.00px;height:1.00px;background:#e1e1e1;"></div>
<div class="t" style="left:7.25px;top:402.60px;font-size:14.00px;line-height:14.00px;color:#444;">11</div>
<div class="r" style="left:0.00px;top:436.00px;width:28.00px;height:1.00px;background:#e1e1e1;"></div>
<div class="t" style="left:6.70px;top:420.60px;font-size:14.00px;line-height:14.00px;color:#444;">12</div>
<div class="r" style="left:0.00px;top:454.00px;width:28.00px;height:1.00px;background:#e1e1e1;"></div>
<div class="t" style="left:6.70px;top:438.60px;font-size:14.00px;line-height:14.00px;color:#444;">13</div>
<div class="r" style="left:0.00px;top:472.00px;width:28.00px;height:1.00px;background:#e1e1e1;"></div>
<div class="t" style="left:6.70px;top:456.60px;font-size:14.00px;line-height:14.00px;color:#444;">14</div>
<div class="r" style="left:0.00px;top:490.00px;width:28.00px;height:1.00px;background:#e1e1e1;"></div>
<div class="t" style="left:6.70px;top:474.60px;font-size:14.00px;line-height:14.00px;color:#444;">15</div>
<div class="r" style="left:0.00px;top:508.00px;width:28.00px;height:1.00px;background:#e1e1e1;"></div>
<div class="t" style="left:6.70px;top:492.60px;font-size:14.00px;line-height:14.00px;color:#444;">16</div>
<div class="r" style="left:0.00px;top:526.00px;width:28.00px;height:1.00px;background:#e1e1e1;"></div>
<div class="t" style="left:6.70px;top:510.60px;font-size:14.00px;line-height:14.00px;color:#444;">17</div>
<div class="r" style="left:0.00px;top:544.00px;width:28.00px;height:1.00px;background:#e1e1e1;"></div>
<div class="t" style="left:6.70px;top:528.60px;font-size:14.00px;line-height:14.00px;color:#444;">18</div>
<div class="r" style="left:0.00px;top:562.00px;width:28.00px;height:1.00px;background:#e1e1e1;"></div>
<div class="t" style="left:6.70px;top:546.60px;font-size:14.00px;line-height:14.00px;color:#444;">19</div>
<div class="r" style="left:0.00px;top:580.00px;width:28.00px;height:1.00px;background:#e1e1e1;"></div>
<div class="t" style="left:6.70px;top:564.60px;font-size:14.00px;line-height:14.00px;color:#444;">20</div>
<div class="r" style="left:0.00px;top:598.00px;width:28.00px;height:1.00px;background:#e1e1e1;"></div>
<div class="t" style="left:6.70px;top:582.60px;font-size:14.00px;line-height:14.00px;color:#444;">21</div>
<div class="r" style="left:0.00px;top:616.00px;width:28.00px;height:1.00px;background:#e1e1e1;"></div>
<div class="t" style="left:6.70px;top:600.60px;font-size:14.00px;line-height:14.00px;color:#444;">22</div>
<div class="r" style="left:0.00px;top:634.00px;width:28.00px;height:1.00px;background:#e1e1e1;"></div>
<div class="t" style="left:6.70px;top:618.60px;font-size:14.00px;line-height:14.00px;color:#1e5b3a;">23</div>
<div class="r" style="left:0.00px;top:652.00px;width:28.00px;height:1.00px;background:#e1e1e1;"></div>
<div class="t" style="left:6.70px;top:636.60px;font-size:14.00px;line-height:14.00px;color:#444;">24</div>
<div class="r" style="left:0.00px;top:670.00px;width:28.00px;height:1.00px;background:#e1e1e1;"></div>
<div class="t" style="left:6.70px;top:654.60px;font-size:14.00px;line-height:14.00px;color:#444;">25</div>
<div class="r" style="left:0.00px;top:688.00px;width:28.00px;height:1.00px;background:#e1e1e1;"></div>
<div class="t" style="left:6.70px;top:672.60px;font-size:14.00px;line-height:14.00px;color:#444;">26</div>
<div class="r" style="left:1344.00px;top:202.00px;width:1.00px;height:476.00px;background:#c6c6c6;"></div>
<div class="r" style="left:1345.00px;top:202.00px;width:21.00px;height:476.00px;background:#fff;"></div>
<div class="r" style="left:1348.00px;top:205.00px;width:15.00px;height:15.00px;border:1px solid #ababab;background:#fff;"></div>
<svg class="s" style="left:1351.00px;top:210.00px;" width="9" height="5" viewBox="0 0 9 5"><path d="M0 5 L4.5 0 L9 5 Z" fill="#777"/></svg>
<div class="r" style="left:1348.00px;top:220.50px;width:15.00px;height:425.00px;border:1px solid #ababab;background:#fff;"></div>
<div class="r" style="left:1349.00px;top:646.00px;width:13.00px;height:18.00px;background:#e8e8e8;"></div>
<div class="r" style="left:1348.00px;top:664.00px;width:15.00px;height:15.00px;border:1px solid #ababab;background:#fff;"></div>
<svg class="s" style="left:1351.00px;top:669.00px;" width="9" height="5" viewBox="0 0 9 5"><path d="M0 0 H9 L4.5 5 Z" fill="#777"/></svg>
<div class="r" style="left:0.00px;top:678.00px;width:1366.00px;height:28.00px;background:#fff;"></div>
<div class="r" style="left:0.00px;top:678.00px;width:805.00px;height:28.00px;background:#f3f3f3;"></div>
<div class="r" style="left:834.00px;top:678.00px;width:532.00px;height:28.00px;background:#f3f3f3;"></div>
<div class="r" style="left:0.00px;top:677.50px;width:1345.00px;height:1.00px;background:#a8a8a8;"></div>
<svg class="s" style="left:27.00px;top:687.00px;" width="5" height="9" viewBox="0 0 5 9"><path d="M5 0 V9 L0 4.5 Z" fill="#1e5b3a"/></svg>
<svg class="s" style="left:56.00px;top:687.00px;" width="5" height="9" viewBox="0 0 5 9"><path d="M0 0 V9 L5 4.5 Z" fill="#c0c0c0"/></svg>
<div class="t" style="left:80.50px;top:686.50px;font-size:13.00px;line-height:13.00px;color:#1e5b3a;font-weight:bold;transform:scaleX(1.0185);transform-origin:0 0;">...</div>
<div class="r" style="left:100.50px;top:682.50px;width:1.00px;height:19.00px;background:#b5b5b5;"></div>
<div class="t" style="left:114.00px;top:685.50px;font-size:13.00px;line-height:13.00px;color:#444;transform:scaleX(1.0162);transform-origin:0 0;">Power pivot</div>
<div class="r" style="left:198.00px;top:678.00px;width:84.00px;height:24.00px;background:#fff;border-left:1px solid #a8a8a8;border-right:1px solid #a8a8a8;"></div>
<div class="r" style="left:198.00px;top:700.50px;width:84.00px;height:2.00px;background:#217346;"></div>
<div class="t" style="left:210.70px;top:684.50px;font-size:13.00px;line-height:13.00px;color:#1e6b40;font-weight:bold;transform:scaleX(0.9633);transform-origin:0 0;">Dasboard</div>
<div class="t" style="left:294.40px;top:685.50px;font-size:13.00px;line-height:13.00px;color:#444;transform:scaleX(0.9937);transform-origin:0 0;">phone search</div>
<div class="r" style="left:386.40px;top:682.00px;width:1.00px;height:20.00px;background:#b5b5b5;"></div>
<svg class="s" style="left:419.00px;top:683.00px;" width="18" height="18" viewBox="0 0 18 18"><circle cx="9" cy="9" r="7.5" fill="none" stroke="#666" stroke-width="1.3"/><path d="M9 4.5 V13.5 M4.5 9 H13.5" stroke="#666" stroke-width="1.6"/></svg>
<svg class="s" style="left:818.00px;top:686.00px;" width="3" height="12" viewBox="0 0 3 12"><rect x="0" y="0" width="2.5" height="2.5" fill="#999"/><rect x="0" y="4.5" width="2.5" height="2.5" fill="#999"/><rect x="0" y="9" width="2.5" height="2.5" fill="#999"/></svg>
<div class="r" style="left:1284.00px;top:685.50px;width:47.00px;height:14.00px;background:#e6e6e6;"></div>
<div class="r" style="left:851.00px;top:685.00px;width:433.00px;height:15.00px;border:1px solid #ababab;background:#fff;"></div>
<div class="r" style="left:836.00px;top:685.00px;width:15.00px;height:15.00px;border:1px solid #ababab;background:#fff;"></div>
<svg class="s" style="left:841.00px;top:689.00px;" width="5" height="8" viewBox="0 0 5 8"><path d="M5 0 V8 L0 4 Z" fill="#555"/></svg>
<div class="r" style="left:1332.00px;top:685.00px;width:15.00px;height:15.00px;border:1px solid #ababab;background:#fff;"></div>
<svg class="s" style="left:1337.00px;top:689.00px;" width="5" height="8" viewBox="0 0 5 8"><path d="M0 0 V8 L5 4 Z" fill="#555"/></svg>
<div class="r" style="left:0.00px;top:706.00px;width:1366.00px;height:22.00px;background:#217346;"></div>
<div class="r" style="left:0.00px;top:728.00px;width:1366.00px;height:2.00px;background:#1a1612;"></div>
<div class="t" style="left:7.30px;top:711.55px;font-size:11.50px;line-height:11.50px;color:#fff;transform:scaleX(0.9219);transform-origin:0 0;">Ready</div>
<div class="r" style="left:1086.00px;top:706.00px;width:38.00px;height:22.00px;background:#1b6237;"></div>
<svg class="s" style="left:1098.00px;top:710.00px;" width="14" height="14" viewBox="0 0 14 14"><g shape-rendering="crispEdges" fill="none" stroke="#f0fff4" stroke-width="1.2"><rect x="0.5" y="0.5" width="12" height="12"/><path d="M4.5 0.5 V12.5 M8.5 0.5 V12.5 M0.5 4.5 H12.5 M0.5 8.5 H12.5"/></g></svg>
<svg class="s" style="left:1136.00px;top:710.00px;" width="15" height="14" viewBox="0 0 15 14"><g shape-rendering="crispEdges" fill="none" stroke="#f0fff4" stroke-width="1.2"><rect x="0.5" y="0.5" width="13" height="12"/><rect x="3.5" y="2.5" width="7" height="8"/><path d="M5 4.5 H9 M5 6.5 H9 M5 8.5 H9"/></g></svg>
<svg class="s" style="left:1174.00px;top:710.00px;" width="15" height="14" viewBox="0 0 15 14"><g shape-rendering="crispEdges"><path d="M0.5 0.5 H13.5 V12.5 H0.5 Z" fill="none" stroke="#f0fff4" stroke-width="1.2"/><rect x="1" y="1" width="4" height="6.5" fill="#f0fff4"/><rect x="6" y="1" width="3" height="6.5" fill="#f0fff4"/><path d="M9.5 0.5 V7.5 H0.5" fill="none" stroke="#f0fff4"/></g></svg>
<div class="r" style="left:1205.00px;top:716.50px;width:6.00px;height:2.00px;background:#fff;"></div>
<div class="r" style="left:1215.00px;top:717.00px;width:100.00px;height:1.00px;background:#d9e6dd;"></div>
<div class="r" style="left:1260.50px;top:712.00px;width:5.00px;height:10.00px;background:#fff;"></div>
<svg class="s" style="left:1318.00px;top:713.00px;" width="8" height="8" viewBox="0 0 8 8"><path d="M4 0 V8 M0 4 H8" stroke="#fff" stroke-width="2"/></svg>
<div class="t" style="left:1337.00px;top:711.25px;font-size:11.50px;line-height:11.50px;color:#fff;transform:scaleX(0.9348);transform-origin:0 0;">95%</div>
<div class="r" style="left:29.00px;top:221.00px;width:2.00px;height:3.00px;background:#000;"></div>
<div class="r" style="left:29.00px;top:259.00px;width:2.00px;height:384.00px;background:#000;"></div>
<div class="r" style="left:1318.00px;top:221.00px;width:2.00px;height:422.00px;background:#000;"></div>
<div class="r" style="left:29.00px;top:641.00px;width:1291.00px;height:2.00px;background:#000;"></div>
<div class="t" style="left:605.80px;top:229.00px;font-size:26.00px;line-height:26.00px;color:#000;font-weight:bold;transform:scaleX(0.9941);transform-origin:0 0;">Dashboard</div>
<div class="r" style="left:42.00px;top:264.00px;width:311.00px;height:176.00px;border:2px solid #000;background:#fff;"></div>
<div class="r" style="left:53.00px;top:273.00px;width:154.00px;height:16.00px;background:linear-gradient(to bottom,#e2e2e2,#c9c9c9);"></div>
<div class="t" style="left:57.40px;top:276.05px;font-size:10.50px;line-height:10.50px;color:#000;transform:scaleX(0.8681);transform-origin:0 0;-webkit-text-stroke:0.2px #000;">Average of product_star_rating</div>
<div class="t" style="left:176.30px;top:304.80px;font-size:20.00px;line-height:20.00px;color:#000;font-weight:bold;transform:scaleX(0.9287);transform-origin:0 0;">Total</div>
<div class="r" style="left:80.00px;top:342.50px;width:200.00px;height:1.00px;background:#d9d9d9;"></div>
<div class="r" style="left:80.00px;top:362.50px;width:200.00px;height:1.00px;background:#d9d9d9;"></div>
<div class="r" style="left:80.00px;top:382.50px;width:200.00px;height:1.00px;background:#d9d9d9;"></div>
<div class="t" style="left:51.00px;top:336.75px;font-size:12.50px;line-height:12.50px;color:#333333;transform:scaleX(0.9195);transform-origin:0 0;">4.5</div>
<div class="t" style="left:60.00px;top:356.75px;font-size:12.50px;line-height:12.50px;color:#333333;">4</div>
<div class="t" style="left:51.00px;top:376.75px;font-size:12.50px;line-height:12.50px;color:#333333;transform:scaleX(0.9195);transform-origin:0 0;">3.5</div>
<div class="r" style="left:102.00px;top:357.00px;width:21.00px;height:26.00px;background:#175c80;"></div>
<div class="r" style="left:169.00px;top:363.00px;width:22.00px;height:20.00px;background:#175c80;"></div>
<div class="r" style="left:237.00px;top:359.00px;width:21.00px;height:24.00px;background:#175c80;"></div>
<div class="t" style="left:101.40px;top:392.50px;font-size:12.00px;line-height:12.00px;color:#333333;transform:scaleX(0.9069);transform-origin:0 0;">High</div>
<div class="t" style="left:169.80px;top:392.50px;font-size:12.00px;line-height:12.00px;color:#333333;transform:scaleX(0.9273);transform-origin:0 0;">Low</div>
<div class="t" style="left:237.00px;top:392.50px;font-size:12.00px;line-height:12.00px;color:#333333;transform:scaleX(1.0363);transform-origin:0 0;">Mid</div>
<div class="r" style="left:300.00px;top:369.00px;width:8.00px;height:7.50px;background:#175c80;"></div>
<div class="t" style="left:311.50px;top:365.75px;font-size:12.50px;line-height:12.50px;color:#333333;transform:scaleX(0.9848);transform-origin:0 0;">Total</div>
<div class="r" style="left:53.00px;top:415.50px;width:73.00px;height:15.50px;background:linear-gradient(to bottom,#e2e2e2,#c9c9c9);"></div>
<div class="t" style="left:57.40px;top:418.30px;font-size:10.50px;line-height:10.50px;color:#000;transform:scaleX(0.8379);transform-origin:0 0;-webkit-text-stroke:0.2px #000;">Price_Level</div>
<svg class="s" style="left:112.00px;top:421.25px;" width="8" height="5" viewBox="0 0 8 5"><path d="M0 0 H8 L4 4.5 Z" fill="#333"/></svg>
<div class="r" style="left:368.00px;top:265.00px;width:316.00px;height:175.00px;border:2px solid #000;background:#fff;"></div>
<div class="r" style="left:379.00px;top:274.00px;width:97.00px;height:16.00px;background:linear-gradient(to bottom,#e2e2e2,#c9c9c9);"></div>
<div class="t" style="left:383.40px;top:277.05px;font-size:10.50px;line-height:10.50px;color:#000;transform:scaleX(0.8814);transform-origin:0 0;-webkit-text-stroke:0.2px #000;">Sum of Total_sales</div>
<div class="t" style="left:509.25px;top:304.75px;font-size:15.50px;line-height:15.50px;color:#000;transform:scaleX(1.0245);transform-origin:0 0;">Total</div>
<div class="r" style="left:427.00px;top:337.50px;width:189.00px;height:1.00px;background:#d9d9d9;"></div>
<div class="r" style="left:427.00px;top:354.00px;width:189.00px;height:1.00px;background:#d9d9d9;"></div>
<div class="r" style="left:427.00px;top:369.50px;width:189.00px;height:1.00px;background:#d9d9d9;"></div>
<div class="t" style="left:377.00px;top:332.75px;font-size:10.50px;line-height:10.50px;color:#333333;transform:scaleX(0.9420);transform-origin:0 0;">100.00%</div>
<div class="t" style="left:383.00px;top:349.25px;font-size:10.50px;line-height:10.50px;color:#333333;transform:scaleX(0.9270);transform-origin:0 0;">50.00%</div>
<div class="t" style="left:388.50px;top:364.75px;font-size:10.50px;line-height:10.50px;color:#333333;transform:scaleX(0.9228);transform-origin:0 0;">0.00%</div>
<div class="r" style="left:441.00px;top:346.00px;width:11.00px;height:24.00px;background:#175c80;"></div>
<div class="r" style="left:478.00px;top:366.00px;width:12.00px;height:4.00px;background:#175c80;"></div>
<div class="r" style="left:516.00px;top:369.00px;width:12.00px;height:1.00px;background:#175c80;"></div>
<div class="t" style="left:421.15px;top:377.23px;font-size:10.00px;line-height:10.00px;color:#222;transform-origin:30.60px 4.82px;transform:rotate(-45deg) scaleX(0.8725);-webkit-text-stroke:0.15px #222;">Sam…</div>
<div class="t" style="left:461.65px;top:380.13px;font-size:10.00px;line-height:10.00px;color:#222;transform-origin:22.20px 4.82px;transform:rotate(-45deg) scaleX(1.0495);-webkit-text-stroke:0.15px #222;">Moto</div>
<div class="t" style="left:498.65px;top:375.73px;font-size:10.00px;line-height:10.00px;color:#222;transform-origin:27.80px 4.82px;transform:rotate(-45deg) scaleX(0.8273);-webkit-text-stroke:0.15px #222;">Pan…</div>
<div class="t" style="left:533.85px;top:379.73px;font-size:10.00px;line-height:10.00px;color:#222;transform-origin:25.60px 4.82px;transform:rotate(-45deg) scaleX(0.9414);-webkit-text-stroke:0.15px #222;">Nokia</div>
<div class="t" style="left:573.25px;top:374.73px;font-size:10.00px;line-height:10.00px;color:#222;transform-origin:30.00px 4.82px;transform:rotate(-45deg) scaleX(0.9133);-webkit-text-stroke:0.15px #222;">iPho…</div>
<div class="r" style="left:636.00px;top:367.00px;width:6.50px;height:6.50px;background:#175c80;"></div>
<div class="t" style="left:645.00px;top:365.00px;font-size:10.00px;line-height:10.00px;color:#333333;transform:scaleX(1.0900);transform-origin:0 0;">Total</div>
<div class="r" style="left:379.00px;top:415.00px;width:58.00px;height:16.00px;background:linear-gradient(to bottom,#e2e2e2,#c9c9c9);"></div>
<div class="t" style="left:383.40px;top:418.05px;font-size:10.50px;line-height:10.50px;color:#000;transform:scaleX(0.8214);transform-origin:0 0;-webkit-text-stroke:0.2px #000;">Brand</div>
<svg class="s" style="left:416.00px;top:422.00px;" width="6" height="4" viewBox="0 0 6 4"><path d="M0 1 H6 L3 4 Z" fill="#333"/></svg>
<svg class="s" style="left:424.00px;top:417.00px;" width="11" height="12" viewBox="0 0 11 12"><path d="M0 0 H11 L7 5 V12 L4 10 V5 Z" fill="#6d6d6d"/></svg>
<div class="r" style="left:697.00px;top:265.00px;width:309.00px;height:176.00px;border:2px solid #000;background:#fff;"></div>
<div class="r" style="left:708.00px;top:274.00px;width:114.00px;height:16.00px;background:linear-gradient(to bottom,#e2e2e2,#c9c9c9);"></div>
<div class="t" style="left:712.40px;top:277.05px;font-size:10.50px;line-height:10.50px;color:#000;transform:scaleX(0.8616);transform-origin:0 0;-webkit-text-stroke:0.2px #000;">Count of product_price</div>
<div class="r" style="left:824.00px;top:274.00px;width:107.00px;height:16.00px;background:linear-gradient(to bottom,#e2e2e2,#c9c9c9);"></div>
<div class="t" style="left:828.40px;top:277.05px;font-size:10.50px;line-height:10.50px;color:#000;transform:scaleX(0.8765);transform-origin:0 0;-webkit-text-stroke:0.2px #000;">Sum of sales_volume</div>
<div class="t" style="left:768.00px;top:304.75px;font-size:15.50px;line-height:15.50px;color:#000;transform:scaleX(1.0651);transform-origin:0 0;">Count of product_price</div>
<svg class="s" style="left:777.00px;top:338.00px;" width="64" height="64" viewBox="0 0 64 64"><circle cx="32.3" cy="31.8" r="30.8" fill="#175c80"/><path d="M28.9 -0.5 L33.8 -0.5 L33.1 33.5 L31 33.5 Z" fill="#fff"/></svg>
<div class="r" style="left:921.00px;top:340.00px;width:74.00px;height:15.50px;background:linear-gradient(to bottom,#e2e2e2,#c9c9c9);"></div>
<div class="t" style="left:925.40px;top:342.80px;font-size:10.50px;line-height:10.50px;color:#000;transform:scaleX(0.8216);transform-origin:0 0;-webkit-text-stroke:0.2px #000;">price  bin</div>
<svg class="s" style="left:981.00px;top:345.75px;" width="8" height="5" viewBox="0 0 8 5"><path d="M0 0 H8 L4 4.5 Z" fill="#333"/></svg>
<div class="r" style="left:928.00px;top:367.00px;width:4.50px;height:4.50px;background:#175c80;"></div>
<div class="t" style="left:936.00px;top:363.50px;font-size:11.00px;line-height:11.00px;color:#333333;transform:scaleX(0.9158);transform-origin:0 0;">0 - 1000</div>
<div class="r" style="left:928.00px;top:388.00px;width:4.50px;height:4.50px;background:#e8743b;"></div>
<div class="t" style="left:936.00px;top:384.00px;font-size:11.00px;line-height:11.00px;color:#333333;transform:scaleX(0.9199);transform-origin:0 0;">1001 - 3000</div>
<div class="r" style="left:708.00px;top:416.00px;width:38.00px;height:15.50px;background:linear-gradient(to bottom,#e2e2e2,#c9c9c9);"></div>
<div class="t" style="left:712.40px;top:418.80px;font-size:10.50px;line-height:10.50px;color:#000;transform:scaleX(0.8626);transform-origin:0 0;-webkit-text-stroke:0.2px #000;">Values</div>
<div class="r" style="left:1018.00px;top:266.00px;width:272.00px;height:367.00px;border:2px solid #000;background:#fff;"></div>
<div class="r" style="left:1029.00px;top:275.00px;width:108.00px;height:15.00px;background:linear-gradient(to bottom,#e2e2e2,#c9c9c9);"></div>
<div class="t" style="left:1033.40px;top:277.55px;font-size:10.50px;line-height:10.50px;color:#000;transform:scaleX(0.8617);transform-origin:0 0;-webkit-text-stroke:0.2px #000;">Sum of product_price</div>
<div class="t" style="left:1137.00px;top:305.75px;font-size:15.50px;line-height:15.50px;color:#000;transform:scaleX(1.0398);transform-origin:0 0;">Total</div>
<div class="r" style="left:1056.00px;top:338.50px;width:166.00px;height:1.00px;background:#d9d9d9;"></div>
<div class="t" style="left:1028.00px;top:334.00px;font-size:10.00px;line-height:10.00px;color:#333333;transform:scaleX(1.0180);transform-origin:0 0;">160</div>
<div class="r" style="left:1056.00px;top:371.38px;width:166.00px;height:1.00px;background:#d9d9d9;"></div>
<div class="t" style="left:1028.00px;top:366.88px;font-size:10.00px;line-height:10.00px;color:#333333;transform:scaleX(1.0180);transform-origin:0 0;">140</div>
<div class="r" style="left:1056.00px;top:404.25px;width:166.00px;height:1.00px;background:#d9d9d9;"></div>
<div class="t" style="left:1028.00px;top:399.75px;font-size:10.00px;line-height:10.00px;color:#333333;transform:scaleX(1.0180);transform-origin:0 0;">120</div>
<div class="r" style="left:1056.00px;top:437.12px;width:166.00px;height:1.00px;background:#d9d9d9;"></div>
<div class="t" style="left:1028.00px;top:432.62px;font-size:10.00px;line-height:10.00px;color:#333333;transform:scaleX(1.0180);transform-origin:0 0;">100</div>
<div class="r" style="left:1056.00px;top:470.00px;width:166.00px;height:1.00px;background:#d9d9d9;"></div>
<div class="t" style="left:1033.50px;top:465.50px;font-size:10.00px;line-height:10.00px;color:#333333;transform:scaleX(1.0360);transform-origin:0 0;">80</div>
<div class="r" style="left:1056.00px;top:502.88px;width:166.00px;height:1.00px;background:#d9d9d9;"></div>
<div class="t" style="left:1033.50px;top:498.38px;font-size:10.00px;line-height:10.00px;color:#333333;transform:scaleX(1.0360);transform-origin:0 0;">60</div>
<div class="r" style="left:1056.00px;top:535.75px;width:166.00px;height:1.00px;background:#d9d9d9;"></div>
<div class="t" style="left:1033.50px;top:531.25px;font-size:10.00px;line-height:10.00px;color:#333333;transform:scaleX(1.0360);transform-origin:0 0;">40</div>
<div class="r" style="left:1056.00px;top:568.62px;width:166.00px;height:1.00px;background:#d9d9d9;"></div>
<div class="t" style="left:1033.50px;top:564.12px;font-size:10.00px;line-height:10.00px;color:#333333;transform:scaleX(1.0360);transform-origin:0 0;">20</div>
<div class="r" style="left:1056.00px;top:601.50px;width:166.00px;height:1.00px;background:#d9d9d9;"></div>
<div class="t" style="left:1039.00px;top:597.00px;font-size:10.00px;line-height:10.00px;color:#333333;transform:scaleX(1.0714);transform-origin:0 0;">0</div>
<div class="r" style="left:1112.00px;top:381.00px;width:53.00px;height:221.00px;background:#175c80;"></div>
<div class="t" style="left:1126.50px;top:612.50px;font-size:10.00px;line-height:10.00px;color:#333333;transform:scaleX(1.1374);transform-origin:0 0;">Total</div>
<div class="r" style="left:1242.00px;top:476.00px;width:5.50px;height:6.00px;background:#175c80;"></div>
<div class="t" style="left:1251.00px;top:473.50px;font-size:10.00px;line-height:10.00px;color:#333333;transform:scaleX(1.1137);transform-origin:0 0;">Total</div>
<div class="r" style="left:42.00px;top:456.00px;width:311.00px;height:178.00px;border:2px solid #000;background:#fff;"></div>
<div class="r" style="left:53.00px;top:465.00px;width:106.00px;height:16.00px;background:linear-gradient(to bottom,#e2e2e2,#c9c9c9);"></div>
<div class="t" style="left:57.40px;top:468.05px;font-size:10.50px;line-height:10.50px;color:#000;transform:scaleX(0.8571);transform-origin:0 0;-webkit-text-stroke:0.2px #000;">Max of product_price</div>
<div class="t" style="left:180.50px;top:495.75px;font-size:15.50px;line-height:15.50px;color:#000;transform:scaleX(1.0398);transform-origin:0 0;">Total</div>
<div class="r" style="left:74.00px;top:528.50px;width:194.00px;height:1.00px;background:#d9d9d9;"></div>
<div class="r" style="left:74.00px;top:565.50px;width:194.00px;height:1.00px;background:#d9d9d9;"></div>
<div class="t" style="left:51.70px;top:524.00px;font-size:10.00px;line-height:10.00px;color:#333333;transform:scaleX(1.0541);transform-origin:0 0;">50</div>
<div class="t" style="left:57.00px;top:561.00px;font-size:10.00px;line-height:10.00px;color:#333333;transform:scaleX(1.0714);transform-origin:0 0;">0</div>
<svg class="s" style="left:42.00px;top:456.00px;" width="311" height="178" viewBox="0 0 311 178"><polyline points="50.0,89.0 89.0,80.7 128.0,102.0 167.0,99.0 206.0,84.0" fill="none" stroke="#175c80" stroke-width="3.2" stroke-linejoin="round"/></svg>
<div class="t" style="left:69.15px;top:570.13px;font-size:10.00px;line-height:10.00px;color:#222;transform-origin:29.50px 4.82px;transform:rotate(-45deg) scaleX(0.8814);-webkit-text-stroke:0.15px #222;">mag…</div>
<div class="t" style="left:109.45px;top:568.73px;font-size:10.00px;line-height:10.00px;color:#222;transform-origin:28.30px 4.82px;transform:rotate(-45deg) scaleX(0.9187);-webkit-text-stroke:0.15px #222;">pow…</div>
<div class="t" style="left:147.15px;top:568.73px;font-size:10.00px;line-height:10.00px;color:#222;transform-origin:28.30px 4.82px;transform:rotate(-45deg) scaleX(0.8481);-webkit-text-stroke:0.15px #222;">spid…</div>
<div class="t" style="left:184.75px;top:569.63px;font-size:10.00px;line-height:10.00px;color:#222;transform-origin:31.10px 4.82px;transform:rotate(-45deg) scaleX(1.0193);-webkit-text-stroke:0.15px #222;">tocol…</div>
<div class="t" style="left:223.95px;top:569.63px;font-size:10.00px;line-height:10.00px;color:#222;transform-origin:29.50px 4.82px;transform:rotate(-45deg) scaleX(0.9424);-webkit-text-stroke:0.15px #222;">tone…</div>
<div class="r" style="left:285.00px;top:560.00px;width:27.00px;height:3.00px;background:#175c80;"></div>
<div class="t" style="left:313.00px;top:556.50px;font-size:10.00px;line-height:10.00px;color:#333333;transform:scaleX(1.1374);transform-origin:0 0;">Total</div>
<div class="r" style="left:53.00px;top:608.00px;width:89.00px;height:16.00px;background:linear-gradient(to bottom,#e2e2e2,#c9c9c9);"></div>
<div class="t" style="left:57.40px;top:611.05px;font-size:10.50px;line-height:10.50px;color:#000;transform:scaleX(0.8654);transform-origin:0 0;-webkit-text-stroke:0.2px #000;">product_title</div>
<svg class="s" style="left:121.00px;top:615.00px;" width="6" height="4" viewBox="0 0 6 4"><path d="M0 1 H6 L3 4 Z" fill="#333"/></svg>
<svg class="s" style="left:129.00px;top:610.00px;" width="11" height="12" viewBox="0 0 11 12"><path d="M0 0 H11 L7 5 V12 L4 10 V5 Z" fill="#6d6d6d"/></svg>
<div class="r" style="left:369.00px;top:456.50px;width:313.00px;height:178.00px;border:2px solid #000;background:#fff;"></div>
<div class="r" style="left:380.00px;top:465.00px;width:114.00px;height:16.00px;background:linear-gradient(to bottom,#e2e2e2,#c9c9c9);"></div>
<div class="t" style="left:384.40px;top:468.05px;font-size:10.50px;line-height:10.50px;color:#000;transform:scaleX(0.8616);transform-origin:0 0;-webkit-text-stroke:0.2px #000;">Count of product_price</div>
<div class="r" style="left:496.00px;top:465.00px;width:107.00px;height:16.00px;background:linear-gradient(to bottom,#e2e2e2,#c9c9c9);"></div>
<div class="t" style="left:500.40px;top:468.05px;font-size:10.50px;line-height:10.50px;color:#000;transform:scaleX(0.8765);transform-origin:0 0;-webkit-text-stroke:0.2px #000;">Sum of sales_volume</div>
<div class="r" style="left:424.00px;top:495.00px;width:148.00px;height:1.00px;background:#d9d9d9;"></div>
<div class="r" style="left:424.00px;top:522.90px;width:148.00px;height:1.00px;background:#d9d9d9;"></div>
<div class="r" style="left:424.00px;top:551.00px;width:148.00px;height:1.00px;background:#d9d9d9;"></div>
<div class="r" style="left:424.00px;top:578.50px;width:148.00px;height:1.00px;background:#d9d9d9;"></div>
<div class="t" style="left:379.00px;top:490.25px;font-size:10.50px;line-height:10.50px;color:#333333;transform:scaleX(0.9714);transform-origin:0 0;">150000</div>
<div class="t" style="left:379.00px;top:518.15px;font-size:10.50px;line-height:10.50px;color:#333333;transform:scaleX(0.9714);transform-origin:0 0;">100000</div>
<div class="t" style="left:385.00px;top:546.25px;font-size:10.50px;line-height:10.50px;color:#333333;transform:scaleX(0.9589);transform-origin:0 0;">50000</div>
<div class="t" style="left:407.00px;top:573.75px;font-size:10.50px;line-height:10.50px;color:#333333;transform:scaleX(1.0345);transform-origin:0 0;">0</div>
<div class="r" style="left:463.00px;top:505.00px;width:17.00px;height:74.00px;background:#e8743b;"></div>
<div class="t" style="left:442.00px;top:589.15px;font-size:10.50px;line-height:10.50px;color:#333333;transform:scaleX(0.9870);transform-origin:0 0;">0 - 1000</div>
<div class="t" style="left:507.75px;top:589.15px;font-size:10.50px;line-height:10.50px;color:#333333;transform:scaleX(0.9732);transform-origin:0 0;">1001 - 3000</div>
<div class="r" style="left:587.00px;top:502.00px;width:84.00px;height:16.00px;background:linear-gradient(to bottom,#e2e2e2,#c9c9c9);"></div>
<div class="t" style="left:591.40px;top:505.05px;font-size:10.50px;line-height:10.50px;color:#000;transform:scaleX(0.8722);transform-origin:0 0;-webkit-text-stroke:0.2px #000;">Values</div>
<div class="r" style="left:592.00px;top:527.00px;width:6.50px;height:6.00px;background:#175c80;"></div>
<div class="t" style="left:601.00px;top:525.45px;font-size:10.50px;line-height:10.50px;color:#333333;transform:scaleX(0.9799);transform-origin:0 0;">Count of</div>
<div class="t" style="left:601.00px;top:538.95px;font-size:10.50px;line-height:10.50px;color:#333333;transform:scaleX(1.0220);transform-origin:0 0;">product_price</div>
<div class="r" style="left:592.00px;top:562.00px;width:6.50px;height:6.00px;background:#e8743b;"></div>
<div class="t" style="left:601.00px;top:559.75px;font-size:10.50px;line-height:10.50px;color:#333333;transform:scaleX(0.9459);transform-origin:0 0;">Sum of</div>
<div class="t" style="left:601.00px;top:573.75px;font-size:10.50px;line-height:10.50px;color:#333333;transform:scaleX(0.9657);transform-origin:0 0;">sales_volume</div>
<div class="r" style="left:380.00px;top:609.00px;width:61.00px;height:15.00px;background:linear-gradient(to bottom,#e2e2e2,#c9c9c9);"></div>
<div class="t" style="left:384.40px;top:611.55px;font-size:10.50px;line-height:10.50px;color:#000;transform:scaleX(0.8568);transform-origin:0 0;-webkit-text-stroke:0.2px #000;">price  bin</div>
<svg class="s" style="left:427.00px;top:614.50px;" width="8" height="5" viewBox="0 0 8 5"><path d="M0 0 H8 L4 4.5 Z" fill="#333"/></svg>
<div class="r" style="left:697.00px;top:456.50px;width:307.00px;height:175.50px;border:2px solid #000;background:#fff;"></div>
<div class="r" style="left:708.00px;top:465.00px;width:107.00px;height:16.00px;background:linear-gradient(to bottom,#e2e2e2,#c9c9c9);"></div>
<div class="t" style="left:712.40px;top:468.05px;font-size:10.50px;line-height:10.50px;color:#000;transform:scaleX(0.8765);transform-origin:0 0;-webkit-text-stroke:0.2px #000;">Sum of sales_volume</div>
<div class="t" style="left:833.00px;top:495.75px;font-size:15.50px;line-height:15.50px;color:#000;transform:scaleX(1.0703);transform-origin:0 0;">Total</div>
<div class="r" style="left:739.50px;top:529.00px;width:1.00px;height:72.00px;background:#d9d9d9;"></div>
<div class="r" style="left:785.50px;top:529.00px;width:1.00px;height:72.00px;background:#d9d9d9;"></div>
<div class="r" style="left:831.50px;top:529.00px;width:1.00px;height:72.00px;background:#d9d9d9;"></div>
<div class="r" style="left:877.50px;top:529.00px;width:1.00px;height:72.00px;background:#d9d9d9;"></div>
<div class="r" style="left:923.50px;top:529.00px;width:1.00px;height:72.00px;background:#d9d9d9;"></div>
<div class="r" style="left:741.00px;top:552.00px;width:137.00px;height:25.60px;background:#175c80;"></div>
<div class="t" style="left:706.00px;top:560.75px;font-size:10.50px;line-height:10.50px;color:#333333;transform:scaleX(1.0360);transform-origin:0 0;">Total</div>
<div class="t" style="left:737.00px;top:610.75px;font-size:10.50px;line-height:10.50px;color:#333333;transform:scaleX(1.0345);transform-origin:0 0;">0</div>
<div class="t" style="left:777.50px;top:610.75px;font-size:10.50px;line-height:10.50px;color:#333333;transform:scaleX(0.9714);transform-origin:0 0;">500</div>
<div class="t" style="left:820.50px;top:610.75px;font-size:10.50px;line-height:10.50px;color:#333333;transform:scaleX(0.9829);transform-origin:0 0;">1000</div>
<div class="t" style="left:866.50px;top:610.75px;font-size:10.50px;line-height:10.50px;color:#333333;transform:scaleX(0.9829);transform-origin:0 0;">1500</div>
<div class="t" style="left:912.50px;top:610.75px;font-size:10.50px;line-height:10.50px;color:#333333;transform:scaleX(0.9829);transform-origin:0 0;">2000</div>
<div class="r" style="left:956.00px;top:570.00px;width:6.00px;height:7.00px;background:#175c80;"></div>
<div class="t" style="left:965.00px;top:568.45px;font-size:10.50px;line-height:10.50px;color:#333333;transform:scaleX(1.0360);transform-origin:0 0;">Total</div>
<div class="t" style="left:601.00px;top:687.00px;font-size:28.00px;line-height:28.00px;color:rgba(150,150,150,0.36);font-weight:bold;transform:scaleX(0.9467);transform-origin:0 0;">mostaql.com</div>
<svg class="s" style="left:590.00px;top:630.00px;" width="190" height="90" viewBox="0 0 190 90"><g opacity="0.36"><g fill="none" stroke="#969696" stroke-width="7.5" stroke-linecap="round" stroke-linejoin="round"><path d="M21 52.5 H160"/><path d="M30 28 C12 29 8 54 27 54"/><path d="M38.5 16 V46"/><circle cx="65.4" cy="35.5" r="9.7"/><path d="M96 33 V50 M110 33 V50 M133.5 29 V50"/><circle cx="160" cy="40.3" r="9.5"/></g><g fill="#969696"><circle cx="59.8" cy="13.9" r="4"/><circle cx="71.6" cy="13.9" r="4"/><circle cx="89" cy="23.6" r="4"/><circle cx="100" cy="23.6" r="4"/><circle cx="38.5" cy="12" r="3.5"/></g></g></svg></body></html>
